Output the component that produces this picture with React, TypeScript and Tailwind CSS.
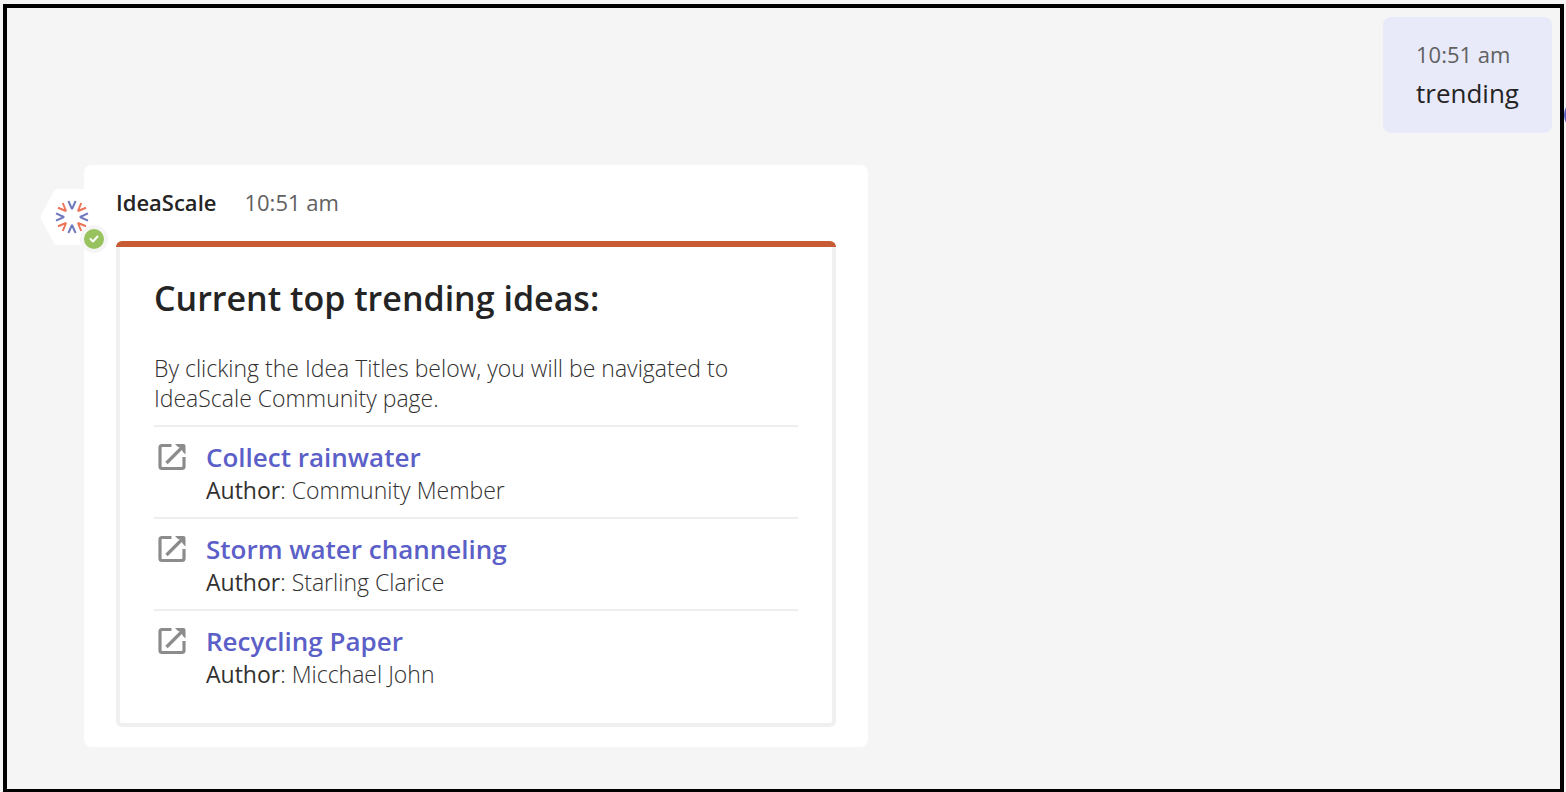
const ideas = [
  { title: "Collect rainwater", author: "Community Member" },
  { title: "Storm water channeling", author: "Starling Clarice" },
  { title: "Recycling Paper", author: "Micchael John" },
];

function BotAvatar() {
  return (
    <div className="relative z-10 mt-6 -mr-5 h-14 w-16 shrink-0">
      <svg viewBox="0 0 64 56" className="h-14 w-16" role="img" aria-label="IdeaScale">
        <path d="M17 0h30q2 0 3 2l13 24q1 2 0 4L50 54q-1 2-3 2H17q-2 0-3-2L1 30q-1-2 0-4L14 2q1-2 3-2z" fill="#fff" />
        {[0, 90, 180, 270].map((angle) => (
          <g key={angle} transform={`translate(32 28) rotate(${angle})`} fill="none" strokeWidth="2" strokeLinejoin="bevel">
            <path d="M-3.6-16 0-8l3.6-8" stroke="#6f79bb" />
            <path d="M9.200-14 6-6l8-3.200" stroke="#ec7557" />
          </g>
        ))}
      </svg>
      <span className="absolute top-9 left-10 flex size-7 items-center justify-center rounded-full bg-[#f5f5f5]">
        <svg viewBox="0 0 20 20" className="size-5" role="img" aria-label="Available">
          <circle cx="10" cy="10" r="10" fill="#98c25d" />
          <path d="M6.500 10l2.500 2.500L13.500 7.500" fill="none" stroke="#fff" strokeWidth="2" strokeLinecap="round" strokeLinejoin="round" />
        </svg>
      </span>
    </div>
  );
}

function OpenIcon() {
  return (
    <svg viewBox="0 0 36 36" className="size-9 shrink-0" fill="none" stroke="#8c8c8c" strokeWidth="3.2" aria-hidden="true">
      <path d="M17.500 6.500H8a2 2 0 0 0-2 2v19a2 2 0 0 0 2 2h20a2 2 0 0 0 2-2V18" />
      <path d="M29 7.500 12.500 24" />
      <path d="M21 5h8.500a2 2 0 0 1 2 2v8.500L28.500 12.500l-1-3.500L24 8z" fill="#8c8c8c" stroke="none" />
    </svg>
  );
}

export default function App() {
  return (
    <div className="relative flex min-h-screen overflow-hidden bg-[#f5f5f5] pt-1 pr-0.5 pl-[3px] font-['Open_Sans',sans-serif] text-[#252424]">
      <main className="flex-1 border-4 border-b-[3px] border-black px-2 pt-[9px] pb-10">
        <div className="flex justify-end">
          <div className="rounded-lg bg-[#e8eaf9] px-[33px] pt-[19px] pb-5">
            <div className="text-[22px] leading-9 text-[#616161]">10:51 am</div>
            <div className="pt-px text-[26px] leading-10">trending</div>
          </div>
        </div>

        <div className="mt-8 ml-[25px] flex items-start">
          <BotAvatar />
          <article className="w-full max-w-[784px] rounded-lg bg-white px-8 pt-[19px] pb-5">
            <header className="flex items-baseline gap-7 leading-9">
              <span className="text-[22px] font-semibold">IdeaScale</span>
              <span className="text-[22px] text-[#616161]">10:51 am</span>
            </header>

            <section className="mt-[21px]">
              <div className="h-1.5 rounded-t-md bg-[#c75b33]" />
              <div className="rounded-b-md border-4 border-t-0 border-[#f0f0f0] px-[34px] pt-[27px] pb-[22px]">
                <h1 className="text-[34px] leading-12 font-semibold">Current top trending ideas:</h1>
                <p className="mt-[31px] mb-3 text-[23px] leading-[30px] font-light text-[#323130]">
                  By clicking the Idea Titles below, you will be navigated to IdeaScale Community page.
                </p>
                <ul>
                  {ideas.map((idea) => (
                    <li key={idea.title} className="flex h-[92px] gap-4 border-t-2 border-[#eeeeee] pt-3">
                      <OpenIcon />
                      <div>
                        <a href="#" className="block text-[26px] leading-9 font-semibold text-[#5b5fc7]">
                          {idea.title}
                        </a>
                        <div className="text-[23px] leading-[30px] font-light text-[#323130]">
                          <span className="font-normal">Author</span>: {idea.author}
                        </div>
                      </div>
                    </li>
                  ))}
                </ul>
              </div>
            </section>
          </article>
        </div>
      </main>
      <span className="absolute top-[99px] left-full -ml-0.5 size-8 rounded-full border-3 border-[#5b5fc7]" />
    </div>
  );
}
